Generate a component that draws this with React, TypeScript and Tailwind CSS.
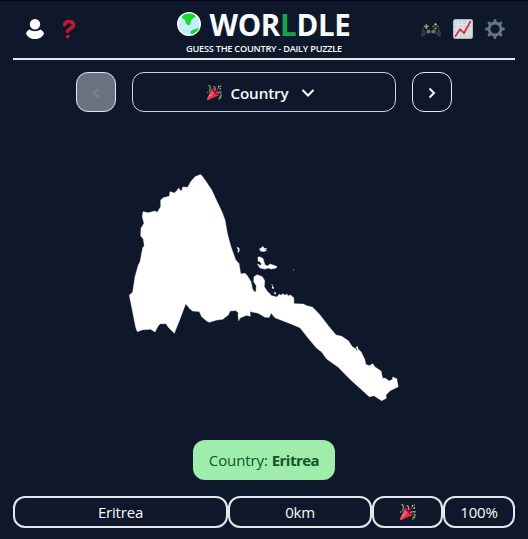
import React from "react";

function Party({ className }: { className: string }) {
  return (
    <svg viewBox="0 0 36 36" className={className}>
      <path fill="#DD2E44" d="M11.6 7.6c-.1.2-.2.3-.3.5L.2 33.2c-.2.5.2 1.4.9 2.1.7.7 1.6 1.1 2.1.9l25-11.1c.2-.1.4-.2.5-.3 1.7-1.7-.7-6.9-5.2-11.5-4.7-4.600-10.200-7.400-11.900-5.700z" />
      <path fill="#EA596E" d="M13 12 .4 32.700 .2 33.200c-.2.5.2 1.400.9 2.100l1 .7 15.200-17C14.900 16.600 13.700 14 13 12z" />
      <path fill="#A0041E" d="M23 13.100c4.600 4.600 7 9.500 5.600 11-1.500 1.400-6.400-1.100-11-5.600-4.500-4.500-7-9.500-5.600-11 1.500-1.400 6.400 1.100 11 5.600z" />
      <path fill="#AA8DD8" d="M18.600 13.600c-1.100-.2-.9-1.400-.8-2.300.5-3.200.7-5.900-2.500-6.300-1.200-.1-1.300-2.600 0-2.500 5.300.6 6.200 4.700 5.400 9.300-.2.900-.9 2-2.100 1.800z" />
      <path fill="#77B255" d="M30.700 22.900c2.700-.8 4.600.500 4.900 1.600.5 1.700-1.200 2.900-2.600 3 1.400.8 1.900 2.300 1.300 3.500-.7 1.300-2.500 1.500-3.700.9.500 1.500 0 3.800-2.300 3.700-1.100-.1-1.100-2 .1-2.200-1.400-2.200.1-3.900 1.900-3.700-.5-2 .8-3.200 2.300-3-.7-1.500.2-2.200 1-2.300-1.200-.300-2.900.700-3.600.100-.6-.600-.200-1.300.700-1.600z" />
      <path fill="#AA8DD8" d="M22.900 20.500c-.700 0-1-.7-.8-1.200.1-.2 3.500-4.800 12.500-3.500 1.300.2 1.100 2.600-.4 2.500-7.200-.8-9.900 2.200-11.300 2.200z" />
      <path fill="#77B255" d="M5.800 16.600c-.8-.1-1.400-.8-1.100-1.600.8-2.700 2.200-7 1.400-10.100C5.500 2 3.200 3.400 2.800 2 2.300.6 4.800-.2 6.300.4c4.700 1.900 2.100 10.700.8 15.200-.2.600-.6 1-1.300 1z" />
      <circle fill="#5C913B" cx="25.500" cy="9.500" r="1.700" />
      <circle fill="#9266CC" cx="2" cy="18" r="2" />
      <circle fill="#5C913B" cx="32.500" cy="19.500" r="2" />
      <circle fill="#FFCC4D" cx="28" cy="4" r="2" />
      <circle fill="#FFCC4D" cx="32.500" cy="2.500" r="1.600" />
      <circle fill="#FFCC4D" cx="32" cy="9" r="2" />
      <circle fill="#FFCC4D" cx="7.500" cy="25" r="1.600" />
    </svg>
  );
}

function Globe() {
  return (
    <svg viewBox="0 0 24 24" className="h-6 w-6">
      <circle cx="12" cy="12" r="11.200" fill="#c7ecff" stroke="#fff" strokeWidth="1.500" />
      <path fill="#16dc26" d="M6.800 2.700C9.500 1.200 14 .9 17.600 2.900c1.400.8 1.100 2.200-.2 2.600-1.500.5-2 2-3.100 2.800-.7 1.200-.5 2.600-1.200 4.200-.9 1.200-2.700.6-3.900-.7C8.300 10.700 9 8.800 7.500 7.600 6 6.800 4.800 6 4.700 5c.3-1 1.200-1.800 2.100-2.300zM14.200 18.800c1.700-.6 2.400-1.800 4.200-1.700 1-.6 2.500-.8 3.800-.8-1 2.400-3.400 5.200-7.700 6-.9-.8-1.700-2.500-.3-3.500z" />
    </svg>
  );
}

function User() {
  return (
    <svg viewBox="0 0 20 22" className="h-[22px] w-5" fill="#fff">
      <circle cx="10" cy="6.200" r="5.200" />
      <path d="M4.600 11.400c2.800 2.300 8 2.300 10.800 0 1.800.8 3.200 2.200 3.600 4-1.500 3.700-5 5.500-9 5.500s-7.500-1.800-9-5.500c.4-1.800 1.800-3.200 3.600-4z" />
    </svg>
  );
}

function Question() {
  return (
    <svg viewBox="0 0 14 20" className="h-5 w-3.5">
      <path d="M2.600 5.800C3 3.500 4.900 2.400 7 2.400c2.700 0 4.400 1.500 4.400 3.700 0 3.900-5.800 3.400-5.800 6.300" fill="none" stroke="#be1931" strokeWidth="3.500" strokeLinecap="round" />
      <circle cx="5.700" cy="17.600" r="1.900" fill="#be1931" />
    </svg>
  );
}

function Gamepad() {
  return (
    <svg viewBox="0 0 20 16" className="mt-0.5 h-4 w-5">
      <path fill="#31373d" d="M4 2.200 7 1l1.500 1h3L13 1l3 1.200c2 1.800 4 7.800 4 11.300 0 1.800-1.800 1.700-2.800.8L14 11.200H6L2.800 14.300c-1 .9-2.800 1-2.800-.8C0 10 2 4 4 2.200z" />
      <path fill="#171b1f" d="M4 2.200 7 1l1.500 1h3L13 1l3 1.200c1.500 2.500 1.800 5.500.4 6.500-1.100.9-2.100 2.800-4 2.400L11 9H9l-1.400 2.100c-1.900.4-2.900-1.500-4-2.400-1.400-1-1.100-4 .4-6.500z" />
      <path stroke="#8899a6" strokeWidth="1.500" d="M5.400 2.300v4.600M3.100 4.600h4.600" />
      <circle cx="7.500" cy="9.500" r="1.900" fill="#66757f" />
      <circle cx="12.500" cy="9.500" r="1.900" fill="#66757f" />
      <circle cx="14.600" cy="2.400" r="1.100" fill="#fdcb58" />
      <circle cx="12.500" cy="4.500" r="1.100" fill="#3b94d9" />
      <circle cx="16.600" cy="4.500" r="1.100" fill="#dd2e44" />
      <circle cx="14.600" cy="6.600" r="1.100" fill="#77b255" />
    </svg>
  );
}

function Chart() {
  return (
    <svg viewBox="0 0 20 20" className="h-5 w-5">
      <rect x=".2" y=".2" width="19.600" height="19.600" rx="2" fill="#e1e8ed" />
      <rect x="1" y="1" width="18" height="18" rx="1" fill="#ccd6dd" />
      <path d="M5 1v18M9.600 1v18M14.300 1v18M1 5.500h18M1 10h18M1 14.600h18" stroke="#e1e8ed" strokeWidth="1" />
      <path d="M2.500 17 7 10.200l4 4 6.200-11.400" stroke="#dd2e44" strokeWidth="1.800" fill="none" strokeLinecap="round" strokeLinejoin="round" />
    </svg>
  );
}

function Gear() {
  return (
    <svg viewBox="0 0 20 20" className="h-5 w-5" stroke="#66757f" fill="none">
      <circle cx="10" cy="10" r="6" strokeWidth="2.800" />
      <path strokeWidth="3" strokeLinecap="round" d="M10 1.500v2M10 16.500v2M1.500 10h2M16.500 10h2M4.100 4.100l1.200 1.200M14.700 14.700l1.200 1.200M4.100 15.900l1.200-1.200M14.700 5.300l1.200-1.200" />
    </svg>
  );
}

function Eritrea() {
  return (
    <svg viewBox="120 165 290 245" className="h-[245px] w-[290px]" fill="#fff">
      <path stroke="#fff" strokeWidth=".4" strokeLinejoin="round" d="M201 174.700 205 180 211.700 190 218.300 204.300 222 212 225 220 227.500 234 230.700 246 235.700 260 239 263.500 240.700 274 245 273.300 247.300 275.700 251 281.700 252.300 288.300 254 291.700H256L256.300 285.700 253.700 281.700 254 276.700 257.300 274.700 262.300 276.700 264.700 280.700 264.300 286.700 267 291 271.700 295.700 276.700 297 279.300 294.300 281 295.300 283 293.700 285 295.300 287 294 288 296 290.300 295 293.700 297.700 294 303.700 303.300 304 306.700 305.700 312.700 307.300 320 315 328.300 325.700 336 335 341.700 336.300 348.300 340.700 352.300 346.700 355 348.500 357.300 346.300 358.300 349.300 361 351.700 364.700 359.300 365.700 364.300 369.300 365.700 371 364.700 372.700 363.700 375 367 381 371 382.700 378.300 385.500 378.300 389 381 392.500 379.500 392.700 377 396.700 378.700 398.200 386.700 390 390.700 386 395 386.300 398.300 381.700 400.700 374 395.700 369.300 396.700 360 388.300 350 379.300 338.300 367.300 326.700 359 321.700 352 316.700 348.300 308.300 338.300 300 327.700 291.700 324.300 275 317.700 271 313 269.300 317.300 265 317.300 258.300 313.300 250 311.500 250.300 316.300 246.700 315.300 242.300 317 240 318 238.700 320.700 238 315 238.500 313 235.700 310.500 230 311 228.300 315 222.700 319.300 216.700 320 209.300 322.300 207 321.300 201.700 316.700 199.300 311.500 192.700 311 190 309 185.700 303.700 180 319 174.300 333.300 168.300 327.300 166 323.700H160L157.700 326.700 155 332 150.700 329.300 142.700 329.700 137.300 331.700 135.700 327.300 129.300 295 132.700 292.300 135 276.700 138.300 265 140 262 142.700 247.700 144.300 246 143.300 239 140.700 236 141 228.300 144 223.300 142.300 216.700 143 211.700 148.300 212.700 155 211 157.300 212.300 160.700 206.700V200L163.300 197.700 169.300 196.300 170 191.700 174.300 193 177.300 190.300 178.500 188 180.700 190.700 182 190.300 182.700 187 187.700 187.300 190.700 181.700 195 176.700 200 174.700Z" />
      <path stroke="#fff" strokeWidth=".5" d="M237 247.500 239 248 239.300 251 238 252.500 238.200 249.500ZM259 249.500 263 246.500 264 248.500 266.700 248.500 265 249.500 266.500 250.500 264 251.500 260 251 262 249.500ZM258 257 260 257 263 258.500 264 262 265 265 268 266 270 264 277 266.500 276 268 271 269 268.500 268 265 269 260 268 257.500 264 260.500 265.500 261.500 264 260 261.500 258 261Z" />
      <path d="M293 269.300 294 269.800 293 270.500ZM271.300 284 272.800 285 272.400 286.500ZM272 286.200 273.900 287 273.500 289.300 272 288.300ZM274.400 291.700 276 292.700 275.700 294.500 274.200 294Z" />
      <path d="M355.500 347.500 357.200 350.500" stroke="#0f182a" strokeWidth=".8" />
    </svg>
  );
}

const cell = "flex h-8 items-center justify-center rounded-xl border-2 border-gray-200";
const navButton = "flex h-10 w-10 items-center justify-center rounded-xl border border-gray-200";

export default function App() {
  return (
    <div className="flex h-[539px] w-[528px] flex-col border-t border-[#020617] bg-[#0f182a] px-[13px] font-['Open_Sans','Noto_Sans',sans-serif] text-base text-slate-50">
      <header className="flex h-[59px] shrink-0 justify-between border-b-2 border-gray-200">
        <div className="flex h-14 w-[130px] items-center gap-[17px] pl-3">
          <User />
          <Question />
        </div>
        <div className="flex flex-col items-center pt-1">
          <div className="flex h-[38px] items-center gap-2">
            <Globe />
            <h1 className="mt-0.5 text-[29.5px] leading-8 font-bold tracking-[-0.3px] whitespace-nowrap">
              WOR<span className="text-[#16a34a]">L</span>DLE
            </h1>
          </div>
          <p className="text-[9.2px] leading-3 font-semibold tracking-[-0.24px] whitespace-nowrap">GUESS THE COUNTRY - DAILY PUZZLE</p>
        </div>
        <div className="flex h-14 w-[130px] items-center justify-end gap-3 pr-2.5">
          <Gamepad />
          <Chart />
          <Gear />
        </div>
      </header>
      <nav className="mt-3 flex shrink-0 justify-center gap-4">
        <button className={`${navButton} bg-gray-500`}>
          <svg viewBox="0 0 10 12" className="mt-0.5 h-3 w-2.5" fill="none" stroke="#827f80" strokeWidth="1.8"><path d="M7.500 1.500 3 6l4.500 4.500" /></svg>
        </button>
        <button className="flex h-10 w-[264px] items-center justify-center rounded-xl border border-slate-300 pt-px pr-1.5 font-semibold">
          <Party className="h-[15px] w-[15px]" />
          <span className="ml-2 w-[59px] pt-px text-[15.2px] tracking-[-0.1px] whitespace-nowrap">Country</span>
          <svg viewBox="0 0 14 10" className="ml-3 h-2.5 w-3.5" fill="none" stroke="currentColor" strokeWidth="2"><path d="m1.500 2 5.500 5.500L12.500 2" /></svg>
        </button>
        <button className={navButton}>
          <svg viewBox="0 0 10 12" className="mt-0.5 h-3 w-2.5" fill="none" stroke="currentColor" strokeWidth="2"><path d="M2.500 1.500 7 6l-4.500 4.500" /></svg>
        </button>
      </nav>
      <main className="mt-[53px] flex h-[275px] shrink-0 pl-[107px]">
        <Eritrea />
      </main>
      <div className="flex h-10 w-[142px] shrink-0 items-center justify-center self-center rounded-xl bg-[#9fedaa] text-[15px] tracking-[-0.1px] text-[#14532d]">
        <span>Country: <b className="font-bold tracking-[-0.5px]">Eritrea</b></span>
      </div>
      <div className="mt-4 grid shrink-0 grid-cols-[215px_144px_71px_72px] text-[15px] tracking-[-0.2px]">
        <div className={cell}>Eritrea</div>
        <div className={cell}>0km</div>
        <div className={cell}><Party className="h-4 w-4" /></div>
        <div className={cell}>100%</div>
      </div>
    </div>
  );
}
